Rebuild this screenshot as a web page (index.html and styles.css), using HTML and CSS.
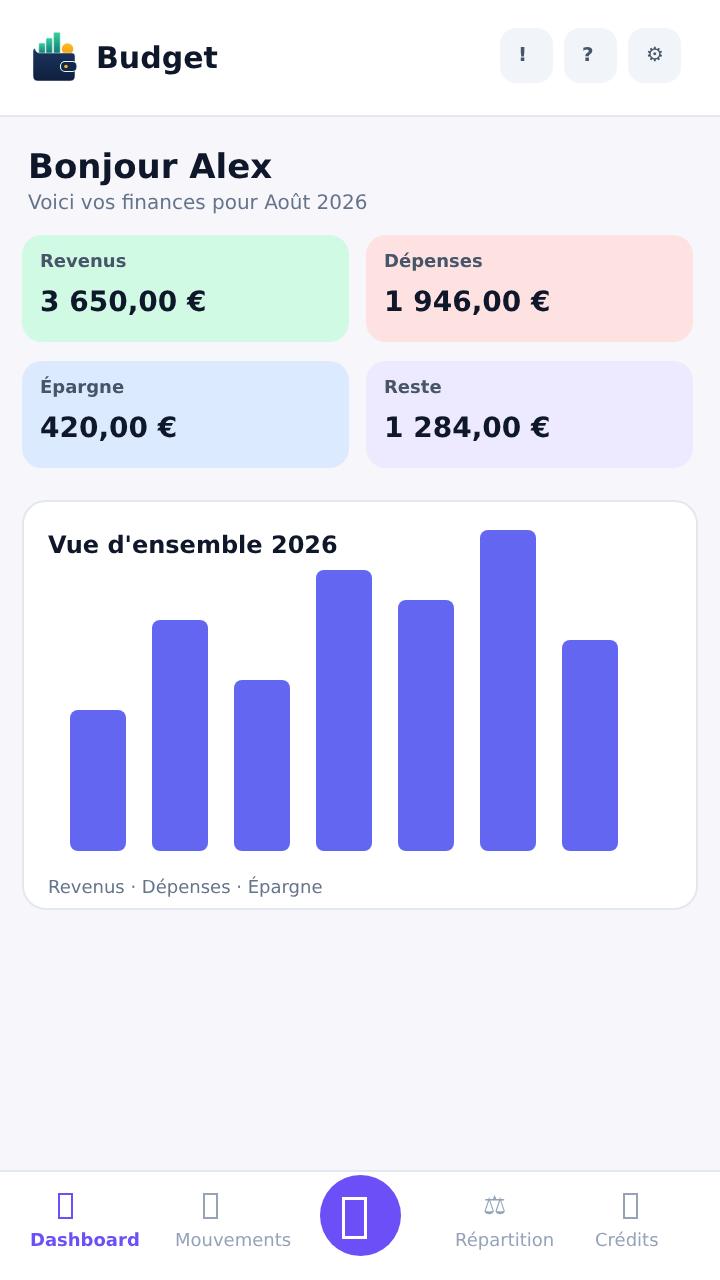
FILE: index.html
```html
<!DOCTYPE html>
<html lang="fr">
<head>
<meta charset="utf-8">
<title>Budget</title>
<link rel="stylesheet" href="styles.css">
</head>
<body>
<div class="app">
  <header class="topbar">
    <div class="brand">
      <svg class="logo" width="50" height="56" viewBox="30 28 50 56" aria-hidden="true">
        <defs>
          <linearGradient id="teal" x1="0" y1="0" x2="0" y2="1"><stop offset="0" stop-color="#34d3a0"/><stop offset="1" stop-color="#0f766e"/></linearGradient>
          <linearGradient id="navy" x1="0" y1="0" x2="0" y2="1"><stop offset="0" stop-color="#1b3560"/><stop offset="1" stop-color="#0f1f3d"/></linearGradient>
          <linearGradient id="amber" x1="0" y1="0" x2="0" y2="1"><stop offset="0" stop-color="#fbbf24"/><stop offset="1" stop-color="#f59e0b"/></linearGradient>
        </defs>
        <circle cx="67.5" cy="49" r="5.8" fill="url(#amber)"/>
        <rect x="38.8" y="43" width="6.4" height="11" rx="1" fill="url(#teal)" stroke="#e6f7f2" stroke-width=".5"/>
        <rect x="46" y="38" width="6.4" height="16" rx="1" fill="url(#teal)" stroke="#e6f7f2" stroke-width=".5"/>
        <rect x="53.6" y="32.3" width="6.6" height="21.7" rx="1" fill="url(#teal)" stroke="#e6f7f2" stroke-width=".5"/>
        <path d="M33 51 Q33 48 35 48.5 Q36 53 40 53 L72 53 Q75 53 75 56 L75 76 Q75 81 70 81 L38 81 Q33 81 33 76 Z" fill="url(#navy)" stroke="#eef2f7" stroke-width=".5"/>
        <rect x="60.5" y="61.5" width="16.5" height="10" rx="4.5" fill="#10294a" stroke="#f1f5f9" stroke-width="1.1"/>
        <circle cx="66" cy="66.5" r="1.8" fill="#f5b031"/>
      </svg>
      <span class="brand-name">Budget</span>
    </div>
    <div class="actions">
      <button class="action">!</button>
      <button class="action">?</button>
      <button class="action">⚙</button>
    </div>
  </header>

  <main class="content">
    <h1 class="hello">Bonjour Alex</h1>
    <p class="sub">Voici vos finances pour Août 2026</p>

    <section class="stats">
      <div class="stat stat-green"><div class="stat-label">Revenus</div><div class="stat-value">3 650,00 €</div></div>
      <div class="stat stat-red"><div class="stat-label">Dépenses</div><div class="stat-value">1 946,00 €</div></div>
      <div class="stat stat-blue"><div class="stat-label">Épargne</div><div class="stat-value">420,00 €</div></div>
      <div class="stat stat-violet"><div class="stat-label">Reste</div><div class="stat-value">1 284,00 €</div></div>
    </section>

    <section class="chart-card">
      <div class="chart-stack">
        <h2 class="chart-title">Vue d'ensemble 2026</h2>
        <div class="bars">
          <div class="bar" style="height:141px"></div>
          <div class="bar" style="height:231px"></div>
          <div class="bar" style="height:171px"></div>
          <div class="bar" style="height:281px"></div>
          <div class="bar" style="height:251px"></div>
          <div class="bar" style="height:321px"></div>
          <div class="bar" style="height:211px"></div>
        </div>
      </div>
      <p class="legend">Revenus · Dépenses · Épargne</p>
    </section>
  </main>

  <nav class="tabbar">
    <a class="tab tab-active"><span class="tab-icon"><span class="tofu"></span></span><span class="tab-label">Dashboard</span></a>
    <a class="tab"><span class="tab-icon"><span class="tofu"></span></span><span class="tab-label">Mouvements</span></a>
    <a class="fab"><span class="tofu-large"></span></a>
    <a class="tab"><span class="tab-icon">⚖</span><span class="tab-label">Répartition</span></a>
    <a class="tab"><span class="tab-icon"><span class="tofu"></span></span><span class="tab-label">Crédits</span></a>
  </nav>
</div>
</body>
</html>
```

FILE: styles.css
```css
* { box-sizing: border-box; }
html, body { margin: 0; padding: 0; }
body {
  font-family: "DejaVu Sans", sans-serif;
  background: #f6f6fb;
  color: #0f172a;
  text-rendering: geometricPrecision;
}
.app {
  width: 720px;
  height: 1280px;
  display: flex;
  flex-direction: column;
  overflow: hidden;
  will-change: transform;
}
.topbar {
  height: 117px;
  flex: none;
  background: #fff;
  border-bottom: 2px solid #e2e8f0;
  display: flex;
  justify-content: space-between;
  padding: 28px 39px 0 30px;
}
.brand { display: flex; align-items: flex-start; gap: 16px; }
.logo { display: block; }
.brand-name { font-size: 30px; font-weight: 700; line-height: 61px; color: #0f172a; }
.actions { display: flex; gap: 11px; }
.action {
  width: 53px;
  height: 55px;
  padding: 0 0 4px 18px;
  border: 0;
  border-radius: 16px;
  background: #f1f5f9;
  color: #475569;
  font: 700 20px "DejaVu Sans", sans-serif;
  text-align: left;
}
.content { flex: 1; padding: 30px 22px 0; }
.hello { margin: 0 0 0 6px; font-size: 34px; line-height: 40px; font-weight: 700; color: #0f172a; }
.sub { margin: 3px 0 0 6px; font-size: 20px; line-height: 24px; color: #64748b; }
.stats {
  margin-top: 21px;
  display: grid;
  grid-template-columns: 327px 327px;
  column-gap: 17px;
  row-gap: 19px;
}
.stat { height: 107px; border-radius: 20px; padding: 16px 18px 0; }
.stat-green { background: #d1fae5; }
.stat-red { background: #fee2e2; }
.stat-blue { background: #dbeafe; }
.stat-violet { background: #ede9fe; }
.stat-label { font-size: 18px; line-height: 22px; font-weight: 700; color: #475569; }
.stat-value { margin-top: 12px; font-size: 28px; line-height: 34px; font-weight: 700; color: #0f172a; }
.chart-card {
  margin-top: 32px;
  width: 676px;
  height: 410px;
  background: #fff;
  border: 2px solid #e2e8f0;
  border-radius: 24px;
  padding: 28px 24px 0;
}
.chart-stack { display: grid; }
.chart-title {
  grid-area: 1 / 1;
  align-self: start;
  margin: 0;
  font-size: 24px;
  line-height: 30px;
  font-weight: 700;
  color: #0f172a;
}
.bars {
  grid-area: 1 / 1;
  height: 321px;
  padding-left: 22px;
  display: flex;
  align-items: flex-end;
  gap: 26px;
}
.bar { width: 56px; background: #6366f1; border-radius: 8px; }
.legend { margin: 26px 0 0; font-size: 18px; line-height: 22px; color: #64748b; }
.tabbar {
  flex: none;
  height: 110px;
  background: #fff;
  border-top: 2px solid #e2e8f0;
  padding: 3px 0 0 30px;
  display: grid;
  grid-template-columns: 145px 145px 135px 140px 1fr;
  align-items: start;
}
.tab { display: flex; flex-direction: column; align-items: flex-start; color: #94a3b8; justify-self: start; }
.tab-active { color: #6d4ff7; }
.tab-icon { display: block; padding-left: 28px; font-size: 26px; line-height: 40px; height: 44px; margin-top: 11px; }
.tofu {
  display: block;
  width: 15px;
  height: 26px;
  margin-top: 7px;
  border: 2px solid currentColor;
}
.tab-label { font-size: 18px; line-height: 22px; white-space: nowrap; }
.tab-active .tab-label { font-weight: 700; }
.fab {
  width: 81px;
  height: 81px;
  border-radius: 50%;
  background: #6d4ff7;
  padding: 22px 0 0 22px;
}
.tofu-large {
  display: block;
  width: 25px;
  height: 42px;
  border: 3px solid #fff;
}
```
